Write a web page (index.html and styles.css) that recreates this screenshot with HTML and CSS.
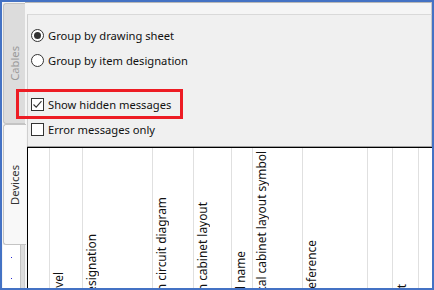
FILE: index.html
```html
<!DOCTYPE html>
<html>
<head>
<meta charset="utf-8">
<link rel="stylesheet" href="styles.css">
</head>
<body>
<div class="frame">
  <div class="tabs">
    <div class="tab cables"><span class="tab-label">Cables</span></div>
    <div class="tab devices"><span class="tab-label">Devices</span></div>
    <div class="tabs-rest">
      <div class="dots"><span class="dot"></span><span class="dot"></span></div>
      <div class="rest-bar"></div>
    </div>
  </div>
  <div class="page">
    <div class="strip"></div>
    <div class="panel">
      <label class="opt row1"><span class="radio checked"></span><span>Group by drawing sheet</span></label>
      <label class="opt"><span class="radio"></span><span>Group by item designation</span></label>
      <label class="opt spaced"><span class="check"><svg width="13" height="13" viewBox="0 0 13 13"><path d="M2.5 6.5 L5.2 9.2 L10.5 3.2" fill="none" stroke="#333" stroke-width="1.1"/></svg></span><span>Show hidden messages</span></label>
      <label class="opt"><span class="check"></span><span>Error messages only</span></label>
      <div class="highlight"></div>
    </div>
    <div class="sep"></div>
    <div class="grid">
      <div class="col w1"></div>
      <div class="col w2"><span class="vlabel m2">Level</span></div>
      <div class="col w3"><span class="vlabel m3">Item designation</span></div>
      <div class="col w4"><span class="vlabel m4">Placement in circuit diagram</span></div>
      <div class="col w5"><span class="vlabel m5">Placement in cabinet layout</span></div>
      <div class="col w6"><span class="vlabel m6">Symbol name</span></div>
      <div class="col w7"><span class="vlabel m7">Graphical cabinet layout symbol</span></div>
      <div class="col w8"><span class="vlabel m8">Part reference</span></div>
      <div class="col w9"></div>
      <div class="col w10"><span class="vlabel m10">Comment</span></div>
      <div class="col w11"></div>
    </div>
  </div>
</div>
</body>
</html>
```

FILE: styles.css
```css
* { box-sizing: border-box; }
html, body { margin: 0; padding: 0; }
body {
  width: 434px; height: 290px; overflow: hidden;
  font-family: "Noto Sans", "Open Sans", sans-serif;
  font-size: 11.2px;
  color: #111;
}
.frame {
  width: 434px; height: 290px;
  border: 2px solid #4472c4;
  background: #f5f5f5;
  display: flex;
}
.tabs {
  width: 23px;
  display: flex; flex-direction: column;
  padding-top: 1px;
}
.tab {
  margin-left: 1px;
  height: 121px;
  display: flex; align-items: center; justify-content: center;
  border: 1px solid #c4c4c4;
  border-right: none;
  border-radius: 3px 0 0 3px;
}
.cables { background: #dcdcdc; color: #9a9a9a; }
.devices { background: #f8f8f8; color: #333; width: 23px; }
.tab-label {
  writing-mode: vertical-rl;
  transform: rotate(180deg);
  line-height: 14px;
}
.tabs-rest { flex: 1; display: flex; margin-left: 1px; }
.dots {
  width: 17px; background: #fff;
  display: flex; flex-direction: column; align-items: center;
  padding-top: 12px; gap: 20px;
}
.dot { width: 1px; height: 1px; background: #2a2ad0; display: block; }
.rest-bar {
  width: 5px;
  background: #dcdcdc;
  border-left: 1px solid #c2c2c2;
  border-right: 1px solid #cfcfcf;
}
.page {
  flex: 1;
  display: flex; flex-direction: column;
  min-width: 0;
}
.strip {
  height: 12px;
  background: #f5f5f5;
  border-top: 1px solid #b8b8b8;
  border-right: 1px solid #c8c8c8;
}
.panel {
  position: relative;
  margin-left: 2px;
  height: 132px;
  background: #f0f0f0;
  border-top: 1px solid #d9d9d9;
  border-left: 1px solid #d0d0d0;
  border-right: 1px solid #c8c8c8;
  padding: 8px 0 0 3px;
}
.opt {
  height: 25px;
  display: flex; align-items: center; gap: 4px;
}
.opt.spaced { margin-top: 19px; }
.radio {
  width: 13px; height: 13px; border-radius: 50%;
  border: 1px solid #333; background: #fff;
  display: flex; align-items: center; justify-content: center;
}
.radio.checked::after {
  content: ""; width: 7px; height: 7px; border-radius: 50%; background: #333;
}
.check {
  width: 13px; height: 13px;
  border: 1px solid #333; background: #fff;
  position: relative;
}
.check svg { position: absolute; left: -1px; top: -1px; }
.highlight {
  position: absolute;
  left: -12px; top: 74px;
  width: 167px; height: 30px;
  border: 3px solid #ed1c24;
}
.sep {
  height: 1px; margin-left: 2px; background: #a0a0a0;
}
.grid {
  flex: 1;
  margin-left: 2px;
  background: #fff;
  border-top: 1px solid #000;
  border-left: 1px solid #000;
  display: flex;
  overflow: hidden;
}
.col {
  border-right: 1px solid #e0e0e0;
  padding-left: 1px;
  overflow: hidden;
  flex: none;
}
.w1 { width: 22px; }
.w2 { width: 33px; }
.w3 { width: 70px; }
.w4 { width: 41px; }
.w5 { width: 38px; }
.w6 { width: 21px; }
.w7 { width: 50px; }
.w8 { width: 65px; }
.w9 { width: 25px; }
.w10 { width: 26px; }
.w11 { flex: 1; border-right: none; }
.vlabel {
  display: block;
  writing-mode: vertical-rl;
  transform: rotate(180deg);
  font-size: 11.9px;
  line-height: 15px;
  white-space: nowrap;
}
.m2 { margin-top: 124px; }
.m3 { margin-top: 86px; }
.m4 { margin-top: 49px; }
.m5 { margin-top: 54px; }
.m6 { margin-top: 103px; }
.m7 { margin-top: 3px; }
.m8 { margin-top: 92px; }
.m10 { margin-top: 136px; }
```
